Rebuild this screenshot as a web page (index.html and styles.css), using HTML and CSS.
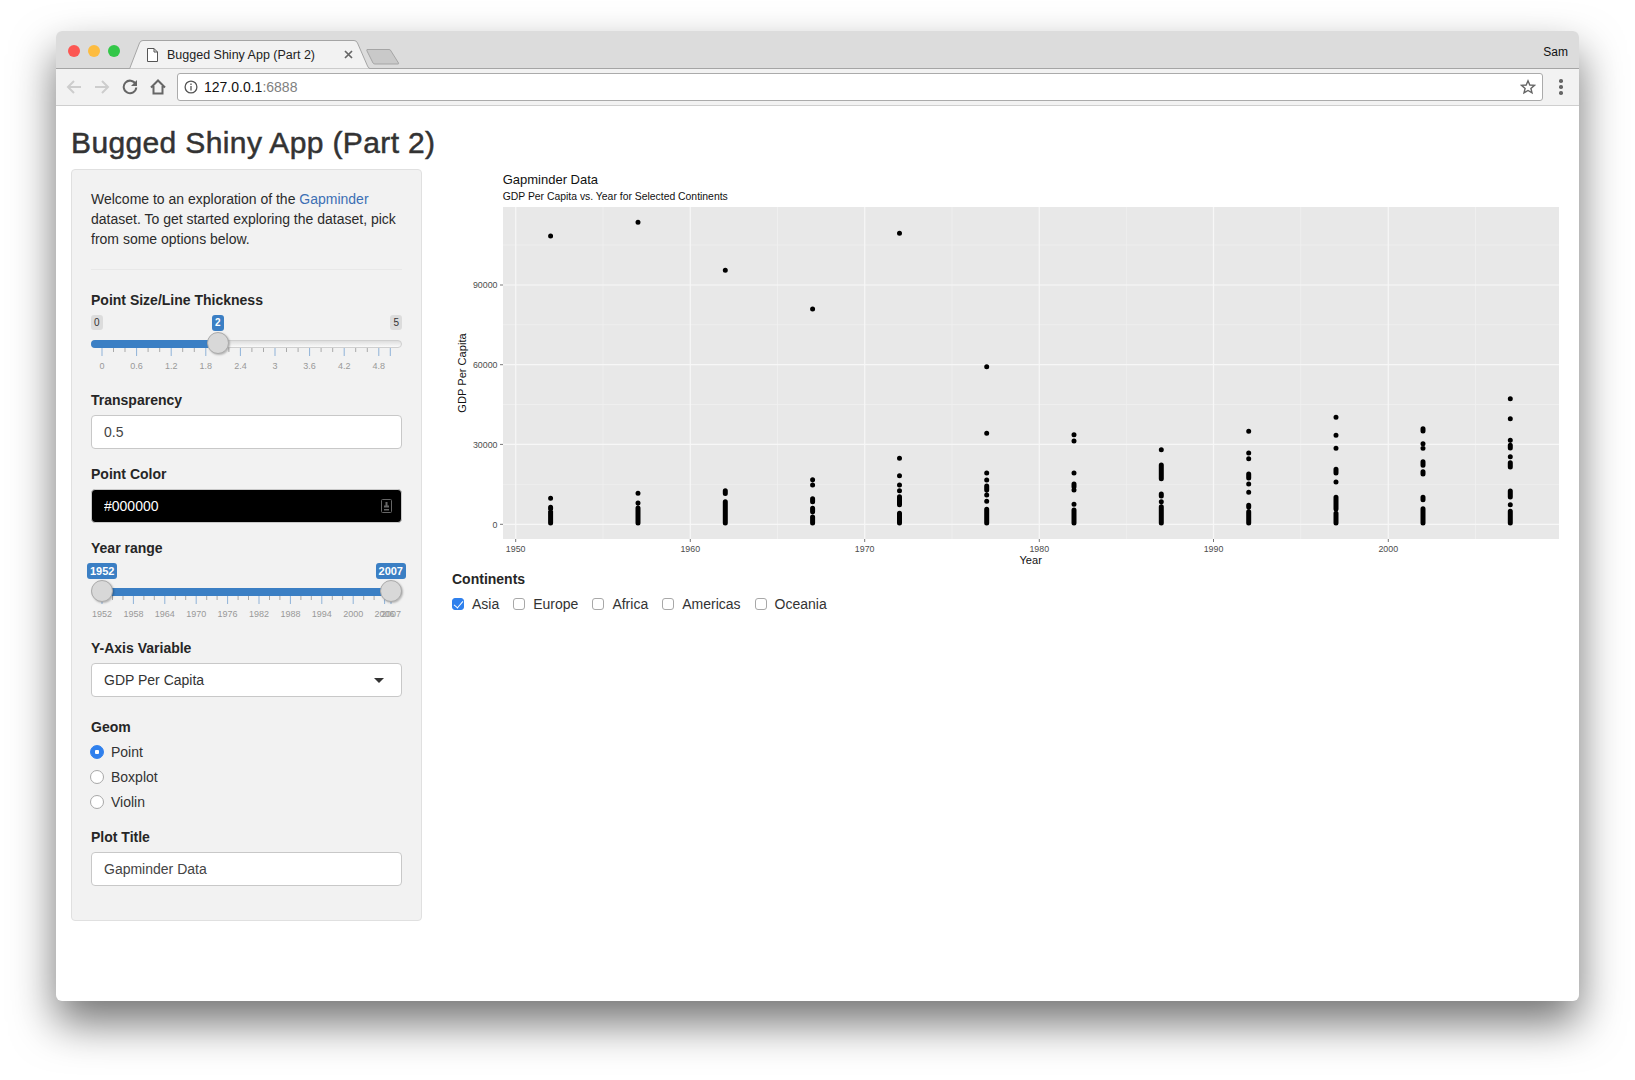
FILE: index.html
```html
<!DOCTYPE html>
<html lang="en">
<head>
<meta charset="utf-8">
<title>Bugged Shiny App (Part 2)</title>
<link rel="stylesheet" href="styles.css">
</head>
<body>
<div class="window">
  <div class="tabstrip">
    <div class="lights">
      <span class="light red"></span><span class="light yellow"></span><span class="light green"></span>
    </div>
    <div class="tab">
      <svg class="tab-shape" viewBox="0 0 242 29"><path d="M0 29 L1.500 29 L11.500 3 Q12.500 0.500 15 0.500 L226 0.500 Q228.500 0.500 229.500 3 L239.500 26 Q240.500 28.500 242 28.500 L242 29 Z"/></svg>
      <svg class="file-icon" viewBox="0 0 11 14"><path d="M0.500 0.500 H7 L10.500 4 V13.500 H0.500 Z M7 0.500 V4 H10.500"/></svg>
      <span class="tab-title">Bugged Shiny App (Part 2)</span>
      <svg class="tab-close" viewBox="0 0 9 9"><path d="M1 1 L8 8 M8 1 L1 8"/></svg>
    </div>
    <svg class="new-tab" viewBox="0 0 34 17"><path d="M1 1.500 H23 Q24.500 1.500 25 3 L32.500 15 Q33 16 32 16 H9 Q7.500 16 7 15 L1 3 Q0.500 1.500 1 1.500 Z"/></svg>
    <span class="user">Sam</span>
  </div>
  <div class="toolbar">
    <svg class="tool dim" viewBox="0 0 16 16"><path d="M15 8 H2 M8 2 L2 8 L8 14"/></svg>
    <svg class="tool dim" viewBox="0 0 16 16"><path d="M1 8 H14 M8 2 L14 8 L8 14"/></svg>
    <svg class="tool" viewBox="0 0 16 16"><path d="M13.600 5 A6.300 6.300 0 1 0 14.300 8.500"/><path class="solid" d="M15 1 V7 H9 Z"/></svg>
    <svg class="tool" viewBox="0 0 16 16"><path d="M1 8.500 L8 1.500 L15 8.500 M3.500 7 V14.500 H12.500 V7"/></svg>
    <div class="omnibox">
      <svg class="info-icon" viewBox="0 0 14 14"><circle cx="7" cy="7" r="5.900"/><path d="M7 6 V10.500 M7 3.500 V5"/></svg>
      <span class="url">127.0.0.1<span class="url-port">:6888</span></span>
      <svg class="star" viewBox="0 0 16 16"><path d="M8 1.800 L9.800 6 L14.400 6.400 L10.900 9.400 L12 13.900 L8 11.500 L4 13.900 L5.100 9.400 L1.600 6.400 L6.200 6 Z"/></svg>
    </div>
    <div class="menu-dots"><span></span><span></span><span></span></div>
  </div>

  <main class="page">
    <h2 class="app-title">Bugged Shiny App (Part 2)</h2>
    <div class="columns">
      <aside class="sidebar">
        <p class="intro">Welcome to an exploration of the <a href="#">Gapminder</a> dataset. To get started exploring the dataset, pick from some options below.</p>
        <hr class="divider">

        <div class="field">
          <div class="label">Point Size/Line Thickness</div>
          <div class="slider">
            <span class="pill pill-end pill-min">0</span>
            <span class="pill pill-end pill-max">5</span>
            <span class="pill pill-on pill-size">2</span>
            <div class="track"></div>
            <div class="track-fill fill-size"></div>
            <svg class="grid" viewBox="0 0 311 60">
              <path class="tick-major" d="M11 33v8M45.600 33v8M80.200 33v8M114.800 33v8M149.400 33v8M184 33v8M218.600 33v8M253.200 33v8M287.800 33v8M299.300 33v8"/>
              <path class="tick-minor" d="M22.500 33v4M34 33v4M57.100 33v4M68.700 33v4M91.700 33v4M103.300 33v4M126.300 33v4M137.900 33v4M160.900 33v4M172.500 33v4M195.500 33v4M207.100 33v4M230.100 33v4M241.700 33v4M264.700 33v4M276.300 33v4"/>
              <text x="11" y="54">0</text><text x="45.600" y="54">0.6</text><text x="80.200" y="54">1.2</text><text x="114.800" y="54">1.8</text><text x="149.400" y="54">2.4</text><text x="184" y="54">3</text><text x="218.600" y="54">3.6</text><text x="253.200" y="54">4.2</text><text x="287.800" y="54">4.8</text>
            </svg>
            <span class="handle handle-size"></span>
          </div>
        </div>

        <div class="field">
          <label class="label" for="alpha">Transparency</label>
          <input class="text-input" id="alpha" value="0.5">
        </div>

        <div class="field">
          <label class="label" for="color">Point Color</label>
          <div class="color-box">
            <input class="text-input color-input" id="color" value="#000000">
            <svg class="picker-icon" viewBox="0 0 11 14"><rect x="0.500" y="0.500" width="10" height="13" rx="1"/><path class="picker-mark" d="M4.500 3h2v3.500h1.500v2h-5v-2h1.500z M3 10h5v1.500h-5z"/></svg>
          </div>
        </div>

        <div class="field">
          <div class="label">Year range</div>
          <div class="slider">
            <div class="track"></div>
            <div class="track-fill fill-range"></div>
            <span class="pill pill-on pill-from">1952</span>
            <span class="pill pill-on pill-to">2007</span>
            <svg class="grid" viewBox="0 0 311 60">
              <path class="tick-major" d="M11 33v8M42.400 33v8M73.800 33v8M105.200 33v8M136.600 33v8M168 33v8M199.400 33v8M230.800 33v8M262.200 33v8M293.600 33v8M300 33v8"/>
              <path class="tick-minor" d="M21.500 33v4M32 33v4M52.900 33v4M63.300 33v4M84.300 33v4M94.700 33v4M115.700 33v4M126.100 33v4M147.100 33v4M157.500 33v4M178.500 33v4M188.900 33v4M209.900 33v4M220.300 33v4M241.300 33v4M251.700 33v4M272.700 33v4M283.100 33v4"/>
              <text x="11" y="54">1952</text><text x="42.400" y="54">1958</text><text x="73.800" y="54">1964</text><text x="105.200" y="54">1970</text><text x="136.600" y="54">1976</text><text x="168" y="54">1982</text><text x="199.400" y="54">1988</text><text x="230.800" y="54">1994</text><text x="262.200" y="54">2000</text><text x="293.600" y="54">2006</text><text x="300" y="54">2007</text>
            </svg>
            <span class="handle handle-from"></span>
            <span class="handle handle-to"></span>
          </div>
        </div>

        <div class="field field-select">
          <div class="label">Y-Axis Variable</div>
          <div class="select-box"><span>GDP Per Capita</span><span class="caret"></span></div>
        </div>

        <div class="field">
          <div class="label">Geom</div>
          <label class="radio-row"><input type="radio" name="geom" checked><span>Point</span></label>
          <label class="radio-row"><input type="radio" name="geom"><span>Boxplot</span></label>
          <label class="radio-row"><input type="radio" name="geom"><span>Violin</span></label>
        </div>

        <div class="field field-last">
          <label class="label" for="title">Plot Title</label>
          <input class="text-input" id="title" value="Gapminder Data">
        </div>
      </aside>

      <section class="content">
        <svg class="plot" viewBox="452 169 1112 400">
          <rect class="panel" x="503" y="207" width="1056" height="332"/>
          <path class="grid-minor" d="M503 484.300H1559M503 404.500H1559M503 324.800H1559M503 245H1559M603 207V539M777.500 207V539M952 207V539M1126.300 207V539M1300.800 207V539M1475.500 207V539"/>
          <path class="grid-major" d="M503 524.300H1559M503 444.400H1559M503 364.700H1559M503 285H1559M515.700 207V539M690.300 207V539M864.700 207V539M1039.300 207V539M1213.500 207V539M1388.300 207V539"/>
          <path class="axis-tick" d="M500 524.300h3M500 444.400h3M500 364.700h3M500 285h3M515.700 539v3M690.300 539v3M864.700 539v3M1039.300 539v3M1213.500 539v3M1388.300 539v3"/>

          <path class="pts" d="M550.600 236h0M550.600 498.300h0M550.600 507.300V509M550.600 511V523"/>
          <path class="pts" d="M638 222.300h0M638 493.300h0M638 503h0M638 508V523"/>
          <path class="pts" d="M725.300 270.300h0M725.300 490.700V493.500M725.300 501.700V523"/>
          <path class="pts" d="M812.600 309h0M812.600 479.700h0M812.600 485h0M812.600 498.700V501.700M812.600 508.300V511.700M812.600 517V523"/>
          <path class="pts" d="M899.500 233.300h0M899.500 458.300h0M899.500 475.700h0M899.500 485h0M899.500 490.700h0M899.500 496.700V504.700M899.500 513.300V523"/>
          <path class="pts" d="M986.700 366.700h0M986.700 433.300h0M986.700 473h0M986.700 480h0M986.700 486V490M986.700 495h0M986.700 501.300h0M986.700 509.300V523"/>
          <path class="pts" d="M1074 434.700h0M1074 441h0M1074 473h0M1074 484V486.700M1074 490h0M1074 504.300h0M1074 510V523"/>
          <path class="pts" d="M1161.300 449.700h0M1161.300 465V478.700M1161.300 494V496M1161.300 501.700h0M1161.300 506.700V523"/>
          <path class="pts" d="M1248.700 431.300h0M1248.700 453h0M1248.700 458.700h0M1248.700 474V478M1248.700 484h0M1248.700 492.300h0M1248.700 505.300V507M1248.700 511.700V523"/>
          <path class="pts" d="M1336 417.300h0M1336 435.300h0M1336 448.300h0M1336 469.300V473M1336 482h0M1336 497.300V509M1336 513.300V523"/>
          <path class="pts" d="M1423 428.700V431M1423 443.700h0M1423 448.300h0M1423 461.700V465.300M1423 471.700V474M1423 497.300V499.700M1423 508.700V523"/>
          <path class="pts" d="M1510.300 398.700h0M1510.300 418.700h0M1510.300 440.300h0M1510.300 445.300V448M1510.300 456.700h0M1510.300 462.700V467M1510.300 491V497M1510.300 504.700h0M1510.300 511.300V523"/>

          <text class="plot-title" x="502.700" y="183.500">Gapminder Data</text>
          <text class="plot-subtitle" x="502.700" y="200.300">GDP Per Capita vs. Year for Selected Continents</text>
          <text class="y-tick" x="497.500" y="527.500">0</text>
          <text class="y-tick" x="497.500" y="447.600">30000</text>
          <text class="y-tick" x="497.500" y="367.900">60000</text>
          <text class="y-tick" x="497.500" y="288.200">90000</text>
          <text class="x-tick" x="515.700" y="551.500">1950</text>
          <text class="x-tick" x="690.300" y="551.500">1960</text>
          <text class="x-tick" x="864.700" y="551.500">1970</text>
          <text class="x-tick" x="1039.300" y="551.500">1980</text>
          <text class="x-tick" x="1213.500" y="551.500">1990</text>
          <text class="x-tick" x="1388.300" y="551.500">2000</text>
          <text class="axis-title" x="1030.700" y="564">Year</text>
          <text class="axis-title" transform="translate(465.500 373) rotate(-90)">GDP Per Capita</text>
        </svg>
        <div class="label">Continents</div>
        <div class="check-row">
          <label class="check-item"><input type="checkbox" checked><span>Asia</span></label>
          <label class="check-item"><input type="checkbox"><span>Europe</span></label>
          <label class="check-item"><input type="checkbox"><span>Africa</span></label>
          <label class="check-item"><input type="checkbox"><span>Americas</span></label>
          <label class="check-item"><input type="checkbox"><span>Oceania</span></label>
        </div>
      </section>
    </div>
  </main>
</div>
</body>
</html>
```
FILE: styles.css
```css
* { box-sizing: border-box; }

html, body { margin: 0; height: 100%; }

body {
  padding: 31px 56px 0;
  background: #fff;
  overflow: hidden;
  font-family: "Liberation Sans", Arial, sans-serif;
  font-size: 14px;
  line-height: 20px;
  color: #2b2b2b;
}

.window {
  width: 1523px;
  height: 970px;
  background: #fff;
  border-radius: 6px;
  overflow: hidden;
  box-shadow: 0 22px 44px rgba(0, 0, 0, .55);
}

.window { overflow: clip; }

/* tab strip */
.tabstrip {
  display: flex;
  align-items: flex-start;
  height: 38px;
  background: #dcdcdc;
  border-bottom: 1px solid #a5a5a5;
}

.lights { display: flex; gap: 8px; margin: 14px 0 0 12px; }

.light { width: 12px; height: 12px; border-radius: 50%; }
.red { background: #fc5753; }
.yellow { background: #fdbc40; }
.green { background: #33c748; }

.tab {
  position: relative;
  display: flex;
  align-items: center;
  width: 242px;
  height: 29px;
  margin: 9px 0 0 8px;
  padding: 0 17px 0 19px;
}

.tab-shape { position: absolute; inset: 0; width: 242px; height: 29px; fill: #f2f2f2; stroke: #a5a5a5; stroke-width: 1; }

.file-icon { position: relative; width: 11px; height: 14px; fill: #fff; stroke: #555; stroke-width: 1; }

.tab-title { position: relative; margin-left: 9px; font-size: 12.500px; color: #222; white-space: nowrap; }

.tab-close { position: relative; width: 9px; height: 9px; margin-left: auto; stroke: #666; stroke-width: 1.700; fill: none; }

.new-tab { width: 34px; height: 17px; margin: 17px 0 0 -4px; fill: #c9c9c9; stroke: #a5a5a5; stroke-width: 1; flex: none; }

.user { margin: 11px 11px 0 auto; font-size: 12px; color: #111; }

/* toolbar */
.toolbar {
  display: flex;
  align-items: center;
  height: 37px;
  padding-left: 10px;
  background: #f2f2f2;
  border-bottom: 1px solid #cfcfcf;
}

.tool { width: 16px; height: 16px; margin-right: 12px; fill: none; stroke: #666; stroke-width: 2; flex: none; }
.tool.dim { stroke: #cdcdcd; }
.tool .solid { fill: #666; stroke: none; }

.omnibox {
  display: flex;
  align-items: center;
  width: 1366px;
  height: 28px;
  margin-left: -1px;
  padding: 0 6px 0 6px;
  background: #fff;
  border: 1px solid #ababab;
  border-radius: 3px;
}

.info-icon { width: 14px; height: 14px; fill: none; stroke: #555; stroke-width: 1.300; }

.url { margin-left: 6px; color: #111; }
.url-port { color: #808080; }

.star { width: 16px; height: 16px; margin-left: auto; fill: none; stroke: #666; stroke-width: 1.400; }

.menu-dots { display: flex; flex-direction: column; gap: 2.500px; margin-left: 16px; }
.menu-dots span { width: 3.500px; height: 3.500px; border-radius: 50%; background: #666; }

/* page */
.page { padding: 0 15px; }

.app-title {
  margin: 20px 0 10px;
  font-size: 30px;
  line-height: 33px;
  font-weight: 400;
  letter-spacing: .37px;
  -webkit-text-stroke: .5px #333;
  color: #333;
}

.columns { display: grid; grid-template-columns: 351px 1fr; column-gap: 30px; }

.sidebar {
  height: 752px;
  padding: 19px;
  background: #f2f2f2;
  border: 1px solid #e0e0e0;
  border-radius: 4px;
}

.intro { margin: 0; }
.intro a { color: #3c6fb4; text-decoration: none; }

.divider { height: 1px; margin: 20px 0; border: 0; background: #e8e8e8; }

.field { margin-bottom: 15px; }
.field-select { margin-bottom: 20px; }
.field-last { margin-bottom: 0; }

.label { display: block; margin-bottom: 5px; font-weight: 700; color: #262626; }

.text-input {
  display: block;
  width: 100%;
  height: 34px;
  padding: 6px 12px;
  background: #fff;
  border: 1px solid #c8c8c8;
  border-radius: 4px;
  font: inherit;
  color: #444;
}

/* colour input */
.color-box { position: relative; }
.color-input { background: #000; color: #fff; }
.picker-icon { position: absolute; top: 10px; right: 10px; width: 11px; height: 14px; fill: none; stroke: #666; }
.picker-mark { fill: #666; stroke: none; }

/* select */
.select-box {
  display: flex;
  align-items: center;
  justify-content: space-between;
  height: 34px;
  padding: 0 17px 0 12px;
  background: #fff;
  border: 1px solid #c8c8c8;
  border-radius: 4px;
  color: #333;
}

.caret { width: 0; height: 0; border-left: 5px solid transparent; border-right: 5px solid transparent; border-top: 5px solid #333; }

/* sliders */
.slider { position: relative; height: 60px; }

.track {
  position: absolute;
  top: 25px;
  left: 0;
  right: 0;
  height: 8px;
  background: linear-gradient(#dedede, #fafafa);
  border: 1px solid #cfcfcf;
  border-radius: 4px;
}

.track-fill { position: absolute; top: 25px; height: 8px; background: #3b7fc4; }
.fill-size { left: 0; width: 127px; border-radius: 4px 0 0 4px; }
.fill-range { left: 11px; width: 289px; }

.grid { position: absolute; inset: 0; width: 311px; height: 60px; overflow: visible; }
.grid text { font-size: 9px; text-anchor: middle; fill: #999; }
.tick-major { stroke: #8fb2d8; stroke-width: 1; }
.tick-minor { stroke: #a9a9a9; stroke-width: 1; }

.pill {
  position: absolute;
  top: 0;
  height: 16px;
  padding: 0 3px;
  border-radius: 3px;
  font-size: 10px;
  line-height: 16px;
  text-align: center;
}
.pill-end { background: #dcdcdc; color: #333; top: 0; height: 15px; line-height: 15px; }
.pill-on { background: #3b7fc4; color: #fff; font-weight: 700; }
.pill-min { left: 0; }
.pill-max { right: 0; }
.pill-size { left: 121px; }
.pill-from { left: -4px; font-size: 11px; }
.pill-to { right: -4px; font-size: 11px; }

.handle {
  position: absolute;
  top: 17px;
  width: 22px;
  height: 22px;
  background: #d8d8d8;
  border: 1px solid #ababab;
  border-radius: 50%;
  box-shadow: 1px 1px 2px rgba(0, 0, 0, .25);
}
.handle-size { left: 116px; }
.handle-from { left: 0; }
.handle-to { left: 289px; }

/* radios */
.radio-row { display: flex; align-items: center; gap: 7px; height: 20px; margin-bottom: 5px; color: #333; }
.radio-row:last-child { margin-bottom: 0; }
.radio-row input {
  appearance: none;
  width: 14px;
  height: 14px;
  margin: 0 0 0 -1px;
  background: #fff;
  border: 1px solid #a8a8a8;
  border-radius: 50%;
}
.radio-row input:checked { background: radial-gradient(circle, #fff 0 2px, #2f80ed 2.500px); border-color: #2f80ed; }

/* main column */
.plot { display: block; width: 1112px; height: 400px; }

.panel { fill: #e8e8e8; }
.grid-minor { stroke: #f0f0f0; stroke-width: .8; fill: none; }
.grid-major { stroke: #f7f7f7; stroke-width: 1.200; fill: none; }
.axis-tick { stroke: #555; stroke-width: .8; fill: none; }
.pts { fill: none; stroke: #000; stroke-width: 5; stroke-linecap: round; }

.plot text { font-family: "Liberation Sans", Arial, sans-serif; }
.plot .plot-title { font-size: 13px; fill: #111; }
.plot .plot-subtitle { font-size: 10.400px; fill: #111; }
.plot .y-tick { font-size: 8.850px; fill: #4d4d4d; text-anchor: end; }
.plot .x-tick { font-size: 8.850px; fill: #4d4d4d; text-anchor: middle; }
.plot .axis-title { font-size: 11.100px; fill: #111; text-anchor: middle; }

.check-row { display: flex; gap: 14px; }
.check-item { display: flex; align-items: center; gap: 8px; height: 20px; color: #333; }
.check-item input {
  position: relative;
  appearance: none;
  width: 12px;
  height: 12px;
  margin: 0;
  background: #fff;
  border: 1px solid #a8a8a8;
  border-radius: 3px;
}
.check-item input:checked { background: #2f80ed; border-color: #2f80ed; }
.check-item input:checked::after {
  content: "";
  position: absolute;
  left: 3px;
  top: 0;
  width: 4px;
  height: 8px;
  border: solid #fff;
  border-width: 0 1.500px 1.500px 0;
  transform: rotate(40deg);
}
```
